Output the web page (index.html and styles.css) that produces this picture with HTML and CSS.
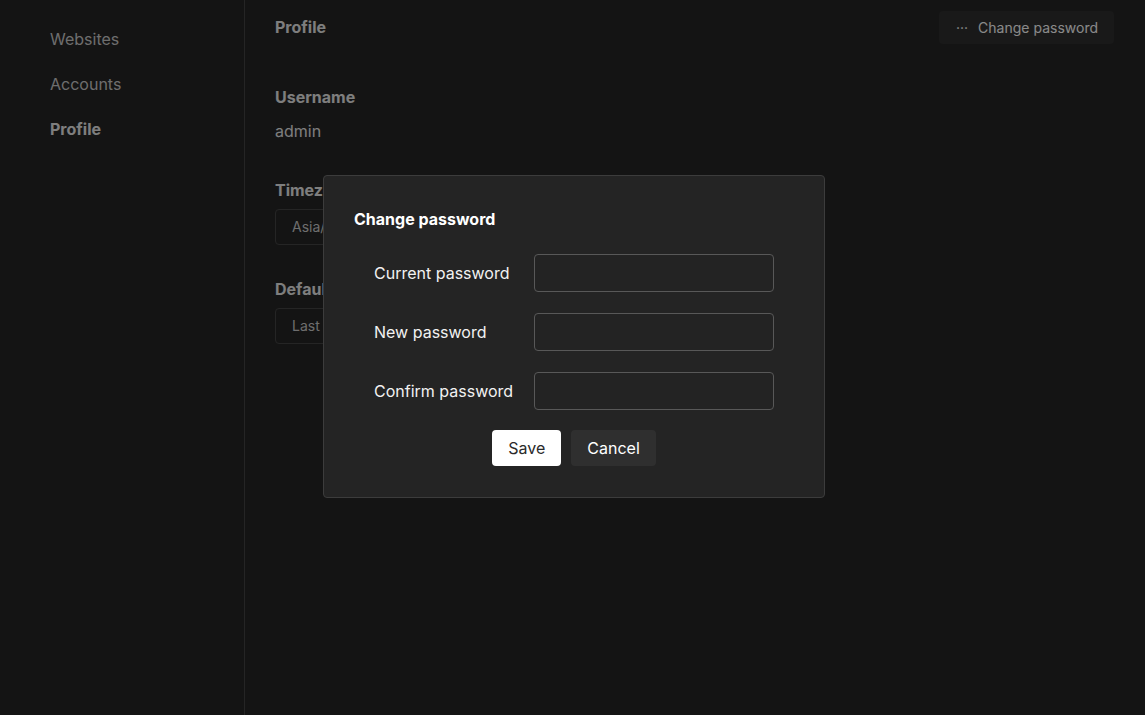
FILE: index.html
```html
<!DOCTYPE html>
<html lang="en">
<head>
    <meta charset="UTF-8">
    <meta name="viewport" content="width=device-width, initial-scale=1.0">
    <title>Profile</title>
    <link rel="stylesheet" href="styles.css">
</head>
<body>
    <div class="app">
        <nav class="sidebar">
            <a class="nav-item" href="#">Websites</a>
            <a class="nav-item" href="#">Accounts</a>
            <a class="nav-item active" href="#">Profile</a>
        </nav>

        <main class="content">
            <div class="page-header">
                <h1 class="page-title">Profile</h1>
                <button class="ghost-btn"><span class="dots">&middot;&middot;&middot;</span>Change password</button>
            </div>

            <div class="field first">
                <div class="field-label">Username</div>
                <div class="field-value">admin</div>
            </div>

            <div class="field">
                <div class="field-label">Timezone</div>
                <div class="select">Asia/Shanghai</div>
            </div>

            <div class="field last">
                <div class="field-label">Default date range</div>
                <div class="select">Last 24 hours</div>
            </div>
        </main>
    </div>

    <!-- Change password modal -->
    <div class="overlay">
        <div class="modal">
            <div class="modal-title">Change password</div>
            <form class="pw-form">
                <label for="current">Current password</label>
                <input type="password" id="current">
                <label for="newpw">New password</label>
                <input type="password" id="newpw">
                <label for="confirm">Confirm password</label>
                <input type="password" id="confirm">
            </form>
            <div class="modal-actions">
                <button class="btn btn-primary">Save</button>
                <button class="btn">Cancel</button>
            </div>
        </div>
    </div>
</body>
</html>
```

FILE: styles.css
```css
:root {
    --bg: #252525;
    --border: #444444;
    --text: #e6e6e6;
    --muted: #c8c8c8;
}

* {
    box-sizing: border-box;
}

body {
    font-family: 'Inter', 'Noto Sans', sans-serif;
    background: var(--bg);
    color: var(--text);
    margin: 0;
    font-size: 16px;
    line-height: 24px;
}

.app {
    display: flex;
    height: 100vh;
}

.sidebar {
    width: 245px;
    flex-shrink: 0;
    border-right: 1px solid var(--border);
    padding: 17px 0 0 50px;
    display: flex;
    flex-direction: column;
}

.nav-item {
    color: var(--muted);
    text-decoration: none;
    line-height: 45px;
}

.nav-item.active {
    color: var(--text);
    font-weight: 700;
}

.content {
    flex: 1;
    padding: 10px 31px 0 30px;
}

.page-header {
    display: flex;
    justify-content: space-between;
    align-items: center;
    height: 34px;
}

.page-title {
    margin: 0;
    font-size: 16px;
    font-weight: 700;
}

.ghost-btn {
    font-family: inherit;
    font-size: 14px;
    background: #2e2e2e;
    color: #fafafa;
    border: none;
    border-radius: 4px;
    height: 33px;
    padding: 0 16px 0 17px;
    display: flex;
    align-items: center;
    gap: 10px;
}

.dots {
    font-size: 14px;
}

.field {
    margin-top: 35px;
}

.field.first {
    margin-top: 41px;
}

.field.last {
    margin-top: 32px;
}

.field-label {
    font-weight: 700;
    margin-bottom: 7px;
}

.field-value {
    margin-top: 10px;
}

.select {
    width: 300px;
    height: 36px;
    border: 1px solid var(--border);
    border-radius: 4px;
    padding: 0 16px;
    font-size: 14px;
    line-height: 34px;
    color: var(--muted);
}

.overlay {
    position: fixed;
    inset: 0;
    background: rgba(0, 0, 0, 0.45);
    display: flex;
    justify-content: center;
    align-items: flex-start;
    padding: 175px 0 0 3px;
}

.modal {
    width: 502px;
    background: #242424;
    border: 1px solid #3c3c3c;
    border-radius: 4px;
    padding: 31px 30px 31px 30px;
    color: #f2f2f2;
}

.modal-title {
    font-weight: 700;
    color: #ffffff;
}

.pw-form {
    width: 400px;
    margin: 23px auto 0;
    display: grid;
    grid-template-columns: 160px 240px;
    row-gap: 21px;
    align-items: center;
}

.pw-form input {
    height: 38px;
    width: 240px;
    background: #232323;
    border: 1px solid #585858;
    border-radius: 4px;
    color: #ffffff;
    padding: 0 10px;
    font-family: inherit;
    font-size: 16px;
}

.modal-actions {
    display: flex;
    justify-content: center;
    gap: 10px;
    margin-top: 20px;
}

.btn {
    font-family: inherit;
    font-size: 16px;
    height: 36px;
    padding: 0 16px;
    border: none;
    border-radius: 4px;
    background: #2f2f2f;
    color: #ffffff;
}

.btn-primary {
    background: #ffffff;
    color: #2a2a2a;
}
```
